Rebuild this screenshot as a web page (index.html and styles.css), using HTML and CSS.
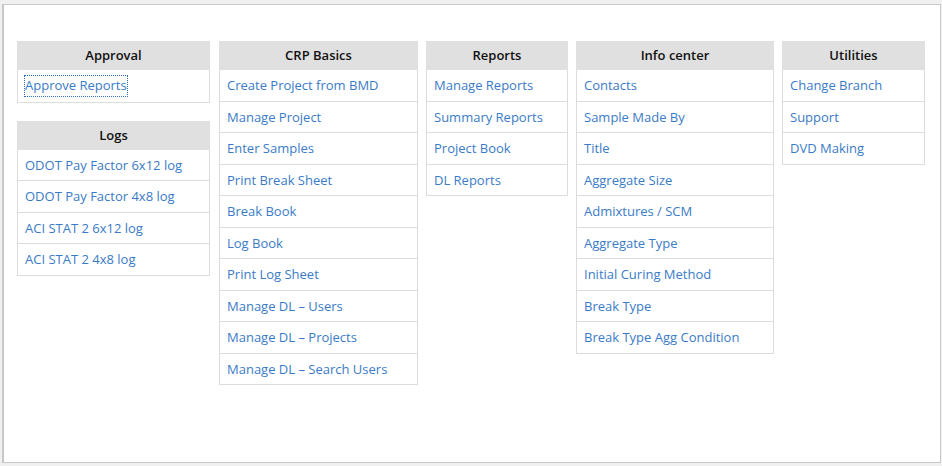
FILE: index.html
```html
<!DOCTYPE html>
<html>
<head>
<meta charset="utf-8">
<link rel="stylesheet" href="styles.css">
</head>
<body>
<div class="frame">
  <div class="menus">
    <div class="col c1">
      <div class="box">
        <div class="head">Approval</div>
        <a class="item focus" href="#">Approve Reports</a>
      </div>
      <div class="box">
        <div class="head">Logs</div>
        <a class="item" href="#">ODOT Pay Factor 6x12 log</a>
        <a class="item" href="#">ODOT Pay Factor 4x8 log</a>
        <a class="item" href="#">ACI STAT 2 6x12 log</a>
        <a class="item" href="#">ACI STAT 2 4x8 log</a>
      </div>
    </div>
    <div class="col c2">
      <div class="box">
        <div class="head">CRP Basics</div>
        <a class="item" href="#">Create Project from BMD</a>
        <a class="item" href="#">Manage Project</a>
        <a class="item" href="#">Enter Samples</a>
        <a class="item" href="#">Print Break Sheet</a>
        <a class="item" href="#">Break Book</a>
        <a class="item" href="#">Log Book</a>
        <a class="item" href="#">Print Log Sheet</a>
        <a class="item" href="#">Manage DL – Users</a>
        <a class="item" href="#">Manage DL – Projects</a>
        <a class="item" href="#">Manage DL – Search Users</a>
      </div>
    </div>
    <div class="col c3">
      <div class="box">
        <div class="head">Reports</div>
        <a class="item" href="#">Manage Reports</a>
        <a class="item" href="#">Summary Reports</a>
        <a class="item" href="#">Project Book</a>
        <a class="item" href="#">DL Reports</a>
      </div>
    </div>
    <div class="col c4">
      <div class="box">
        <div class="head">Info center</div>
        <a class="item" href="#">Contacts</a>
        <a class="item" href="#">Sample Made By</a>
        <a class="item" href="#">Title</a>
        <a class="item" href="#">Aggregate Size</a>
        <a class="item" href="#">Admixtures / SCM</a>
        <a class="item" href="#">Aggregate Type</a>
        <a class="item" href="#">Initial Curing Method</a>
        <a class="item" href="#">Break Type</a>
        <a class="item" href="#">Break Type Agg Condition</a>
      </div>
    </div>
    <div class="col c5">
      <div class="box">
        <div class="head">Utilities</div>
        <a class="item" href="#">Change Branch</a>
        <a class="item" href="#">Support</a>
        <a class="item" href="#">DVD Making</a>
      </div>
    </div>
  </div>
</div>
</body>
</html>
```
FILE: styles.css
```css
html, body {
  margin: 0;
  padding: 0;
  background: #f0f0f0;
}
body {
  font-family: "Open Sans", "DejaVu Sans", sans-serif;
  font-size: 13px;
}
.frame {
  margin: 4px 1px 0 2px;
  height: 459px;
  box-sizing: border-box;
  background: #fff;
  border: 1px solid #c8c8c8;
  border-left: 2px solid #c8c8c8;
  padding: 36px 0 0 13px;
}
.menus {
  display: flex;
  align-items: flex-start;
  gap: 8px;
}
.col {
  display: flex;
  flex-direction: column;
  gap: 18px;
}
.c1 { width: 193px; margin-right: 1px; }
.c2 { width: 199px; }
.c3 { width: 142px; }
.c4 { width: 198px; }
.c5 { width: 143px; }
.box {
  border: 1px solid #dcdcdc;
  border-top: none;
  background: #fff;
}
.head {
  background: #e0e0e0;
  color: #111;
  font-weight: 600;
  text-align: center;
  height: 29px;
  line-height: 29px;
  margin: 0 -1px;
}
.item {
  display: block;
  color: #3a7bc8;
  text-decoration: none;
  padding: 6px 7px;
  line-height: 18.5px;
  border-top: 1px solid #dcdcdc;
}
.head + .item { border-top: none; }
.focus {
  outline: 1px dotted #2a6fb8;
  outline-offset: 0;
  width: max-content;
  padding: 0;
  margin: 6px 7px 6px 7px;
  line-height: 19.5px;
}
```
